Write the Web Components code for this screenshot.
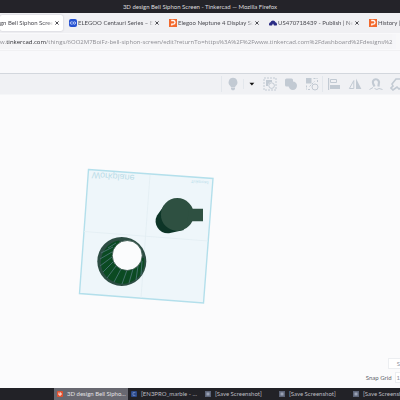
<!DOCTYPE html>
<html lang="en">
<head>
<meta charset="utf-8">
<title>3D design Bell Siphon Screen - Tinkercad</title>
<style>
html, body { margin: 0; height: 100%; }
body { font: 6px/8px Lato, "Open Sans", sans-serif; background: #fbfbfc; overflow: hidden; }
</style>
</head>
<body>
<desktop-screen></desktop-screen>
<script>
function define(name, html) {
  const template = document.createElement('template');
  template.innerHTML = html;
  customElements.define(name, class extends HTMLElement {
    constructor() {
      super();
      this.attachShadow({ mode: 'open' }).append(template.content.cloneNode(true));
    }
  });
}

define('window-title', `
<style>
:host { display: block; background: #242329; color: #dcdcde; text-align: center; line-height: 14px; height: 13px; white-space: nowrap; }
</style><slot></slot>`);

define('browser-tab', `
<style>
:host { display: flex; align-items: center; flex: none; width: 100px; height: 16px; box-sizing: border-box; padding: 0 3px 0 6px; color: #4c4c53; border-radius: 2px; }
:host([active]) { background: #fff; width: 63px; padding-left: 0; box-shadow: 0 0 2px #bbbbc4; }
.label { flex: 1; min-width: 0; overflow: hidden; white-space: nowrap; mask-image: linear-gradient(to left, transparent, #000 6px); }
::slotted(svg) { margin-right: 1px; }
button { all: unset; width: 7px; height: 8px; display: grid; place-items: center; }
button svg { width: 4px; height: 4px; }
</style>
<slot name="icon"></slot>
<span class="label"><slot></slot></span>
<button aria-label="Close tab"><svg viewBox="0 0 4 4"><path d="M.4 .4l3.2 3.2M3.6 .4L.4 3.6" stroke="#38383e" stroke-width=".9"/></svg></button>`);

define('tab-strip', `
<style>
:host { display: flex; align-items: center; height: 20px; background: #f0f0f3; overflow: hidden; }
svg { width: 8px; height: 8px; flex: none; }
</style>
<browser-tab active>gn Bell Siphon Screen</browser-tab>
<browser-tab><svg slot="icon" viewBox="0 0 8 8"><rect width="8" height="8" rx="2" fill="#2450d0"/><g fill="none" stroke="#dce6ff" stroke-width=".8"><path d="M3.6 2.9H2.3a1.1 1.1 0 0 0 0 2.2h1.3"/><circle cx="5.4" cy="4" r="1.2"/></g></svg>ELEGOO Centauri Series – El</browser-tab>
<browser-tab><svg slot="icon" viewBox="0 0 8 8"><rect width="8" height="8" fill="#f2692e"/><path d="M2.2 1.5h2a1.8 1.8 0 0 1 0 3.7H2.8v1.3" fill="none" stroke="#fff" stroke-width="1.3"/></svg>Elegoo Neptune 4 Display Sc</browser-tab>
<browser-tab><svg slot="icon" viewBox="0 0 8 8"><path d="M.5 6.6a2 2 0 0 1 1-3.3 2.6 2.6 0 0 1 5 0 2 2 0 0 1 1 3.3H5L4 4.6 3 6.6z" fill="#2b2c84"/></svg>US470718439 - Publish | Ne</browser-tab>
<browser-tab><svg slot="icon" viewBox="0 0 8 8"><rect width="8" height="8" fill="#f2692e"/><path d="M2.2 1.5h2a1.8 1.8 0 0 1 0 3.7H2.8v1.3" fill="none" stroke="#fff" stroke-width="1.3"/></svg>History |</browser-tab>`);

define('address-bar', `
<style>
:host { display: flex; align-items: center; height: 18px; background: #f9f9fb; border-bottom: 1px solid #f1f1f3; box-sizing: border-box; font-family: "Open Sans", sans-serif; }
.url { flex: 1; color: #8e8e94; white-space: nowrap; overflow: hidden; line-height: 14px; padding-top: 1px; background: #f5f5f7; mask-image: linear-gradient(to left, transparent, #000 8px); }
b { font-weight: 400; color: #2c2c31; }
</style>
<div class="url">w.<b>tinkercad.com</b>/things/6OO2M7BoiFz-bell-siphon-screen/edit?returnTo=https%3A%2F%2Fwww.tinkercad.com%2Fdashboard%2Fdesigns%2</div>`);

define('tool-bar', `
<style>
:host { display: flex; align-items: center; justify-content: flex-end; height: 22px; box-sizing: border-box; background: #f0f1f4; border-top: 1px solid #d3d7dd; border-bottom: 1px solid #f5f6f8; overflow: hidden; }
button { all: unset; flex: none; width: 21px; height: 19px; display: grid; place-items: center; }
button.menu { width: 15px; }
button.edge { width: 10px; overflow: hidden; justify-content: start; padding-left: 4px; }
i { width: 1px; height: 16px; background: #e3e7ec; flex: none; }
i.short { height: 10px; }
svg { width: 14px; height: 14px; fill: #c2cad3; }
.l { fill: none; stroke: #c2cad3; stroke-width: 1; }
</style>
<i></i>
<button aria-label="Show all"><svg viewBox="0 0 14 14"><path d="M7 .8a4.500 4.500 0 0 0-2.600 8.100L5 10.200h4l.6-1.300A4.500 4.500 0 0 0 7 .8zM5 10.800h4v1.200L8 13.200H6l-1-1.200z"/></svg></button>
<i class="short"></i>
<button class="menu" aria-label="Visibility menu"><svg viewBox="0 0 14 14"><path d="M4.500 5.800h4.800L6.900 8.600z" fill="#111"/></svg></button>
<button aria-label="Group"><svg viewBox="0 0 14 14"><rect class="l" x="1" y="1" width="12" height="12" stroke-dasharray="2 1"/><path d="M3 3h6v2.100A3.600 3.600 0 0 0 5 9H3z"/><circle class="l" cx="8.600" cy="8.600" r="2.800"/></svg></button>
<button aria-label="Solid group"><svg viewBox="0 0 14 14"><rect x="1" y="1.500" width="8" height="8" rx="1.500"/><circle cx="8.800" cy="8.700" r="4.200"/></svg></button>
<button aria-label="Ungroup"><svg viewBox="0 0 14 14"><path d="M1 1h5.500v5.500H1z"/><circle class="l" cx="10" cy="10" r="3"/><path class="l" d="M8.500 1.500h4M12.500 3v2.500M1.500 8.500v4M3 12.500h3M4.500 9.500l5-5" stroke-dasharray="2 1"/></svg></button>
<i></i>
<button aria-label="Align"><svg viewBox="0 0 14 14"><path d="M1 1h1.200v12H1zM3 8h10v4H3z"/><path class="l" d="M3.500 2.500h6v3h-6z"/></svg></button>
<button aria-label="Mirror"><svg viewBox="0 0 14 14"><path d="M8 1.500L13.400 12H8z"/><path class="l" d="M5.800 3.600V11.500H1.400z"/></svg></button>
<button aria-label="Cruise"><svg viewBox="0 0 14 14"><path d="M5.500 9.500L4.200 6.800A3.100 3.100 0 1 1 9.800 6.500L9.400 9.500" fill="none" stroke="#c2cad3" stroke-width="2.200"/><path class="l" d="M.5 12.500L4 10.500M5.500 11.500q2.500 2 4.500 0l3.500 1"/></svg></button>
<button class="edge" aria-label="Workplane"><svg viewBox="0 0 14 14"><path d="M2 7l4-5h7v8l-4 2-2-2-4 3-2-2 2-2z" fill="none" stroke="#c2cad3" stroke-width="1.600"/></svg></button>`);

define('design-canvas', `
<style>
:host { display: flex; flex: 1; flex-direction: column; justify-content: flex-end; min-height: 0; position: relative; }
.scene { position: absolute; left: 70px; top: 65px; width: 150px; height: 150px; }
.grid { display: grid; grid-template-columns: auto auto; justify-content: end; align-items: center; gap: 3px; color: #5f646c; padding-bottom: 5px; }
button { all: unset; box-sizing: border-box; height: 11px; line-height: 9px; border: 1px solid #eceef1; border-right: 0; background: #fff; color: #8d9299; padding-left: 1px; }
button.settings { grid-column: 1 / 3; justify-self: end; padding-left: 8px; }
</style>
<svg class="scene" viewBox="70 160 150 150" role="img" aria-label="Workplane with two parts">
<path d="M88.500 169.500L213 178.500L203.500 303L79.500 293.500z" fill="#eef6fa" stroke="#b3dfeb" stroke-width="1.400"/>
<path d="M150 175L141 298M84 231.500L208 241" stroke="#e2eef3" stroke-width=".8" fill="none"/>
<text transform="translate(92 172) rotate(4.300) scale(1 -1)" font-size="9" fill="#bcdde8" font-family="Liberation Sans, sans-serif">Workplane</text>
<text transform="translate(191 180) rotate(4.300) scale(1 -1)" font-size="4" fill="#b5dcea" font-family="Liberation Sans, sans-serif">Tinkercad</text>
<path d="M164.500 205L157 215.500A12.300 12.300 0 0 0 169 233.300L184 230z" fill="#0d3527"/>
<circle cx="177.300" cy="214.500" r="16.400" fill="#2e5041"/>
<path d="M189 208.700h14v12.500h-11l-5 4z" fill="#2e5041"/>
<circle cx="121.800" cy="261.400" r="24.500" fill="#2d4d43"/>
<path d="M119 240.500A21.800 21.800 0 1 0 144 258L127 255z" fill="#0b4a22"/>
<path d="M116 243l-8 5M113 247l-12 6M112 252l-12 7M112 257l-12 9M113 262l-10 10M116 266l-9 12M121 269l-7 13M127 270l-5 14M133 269l-4 14M138 266l-2 14M142 261l-1 14" stroke="#52787c" stroke-width=".8" fill="none"/>
<circle cx="127.200" cy="255.500" r="15" fill="#fbfcfd" stroke="#2d4d43" stroke-width=".8"/>
</svg>
<div class="grid">
<button class="settings">S</button>
<span id="snap">Snap Grid</span><button aria-labelledby="snap">1</button>
</div>`);

define('task-button', `
<style>
:host { display: flex; flex: none; width: 74px; height: 12px; box-sizing: border-box; }
:host([active]) { background: #686870; }
button { all: unset; display: flex; align-items: center; gap: 4px; padding-left: 3px; width: 100%; box-sizing: border-box; white-space: nowrap; overflow: hidden; color: #bcbcc0; }
:host([active]) button { color: #e2e2e4; }
</style><button><slot name="icon"></slot><span><slot></slot></span></button>`);

define('task-bar', `
<style>
:host { display: flex; height: 12px; background: #222227; padding-left: 54px; overflow: hidden; }
svg { width: 6px; height: 6px; flex: none; }
</style>
<task-button active><svg slot="icon" viewBox="0 0 6 6"><rect width="6" height="6" rx="1" fill="#e2512f"/><path d="M2 1.500v2.500h2V2H3" fill="none" stroke="#fff" stroke-width=".9"/></svg>3D design Bell Sipho…</task-button>
<task-button><svg slot="icon" viewBox="0 0 6 6"><rect width="6" height="6" rx="1" fill="#2b4a8c"/><path d="M4.400 1.600H2v2.800h2.400" fill="none" stroke="#7892c8" stroke-width=".8"/></svg>[EN3PRO_marble - …</task-button>
${'<task-button><svg slot="icon" viewBox="0 0 6 6"><rect width="6" height="6" fill="#5c6478"/><rect x="1.5" y="1.5" width="3" height="3" fill="#9aa2b4"/></svg>[Save Screenshot]</task-button>'.repeat(3)}`);

define('desktop-screen', `
<style>
:host { display: flex; flex-direction: column; height: 100vh; overflow: hidden; }
.page-head { height: 22px; background: #f9f9fb; }
</style>
<window-title>3D design Bell Siphon Screen - Tinkercad — Mozilla Firefox</window-title>
<tab-strip></tab-strip>
<address-bar></address-bar>
<div class="page-head"></div>
<tool-bar></tool-bar>
<design-canvas></design-canvas>
<task-bar></task-bar>`);
</script>
</body>
</html>
